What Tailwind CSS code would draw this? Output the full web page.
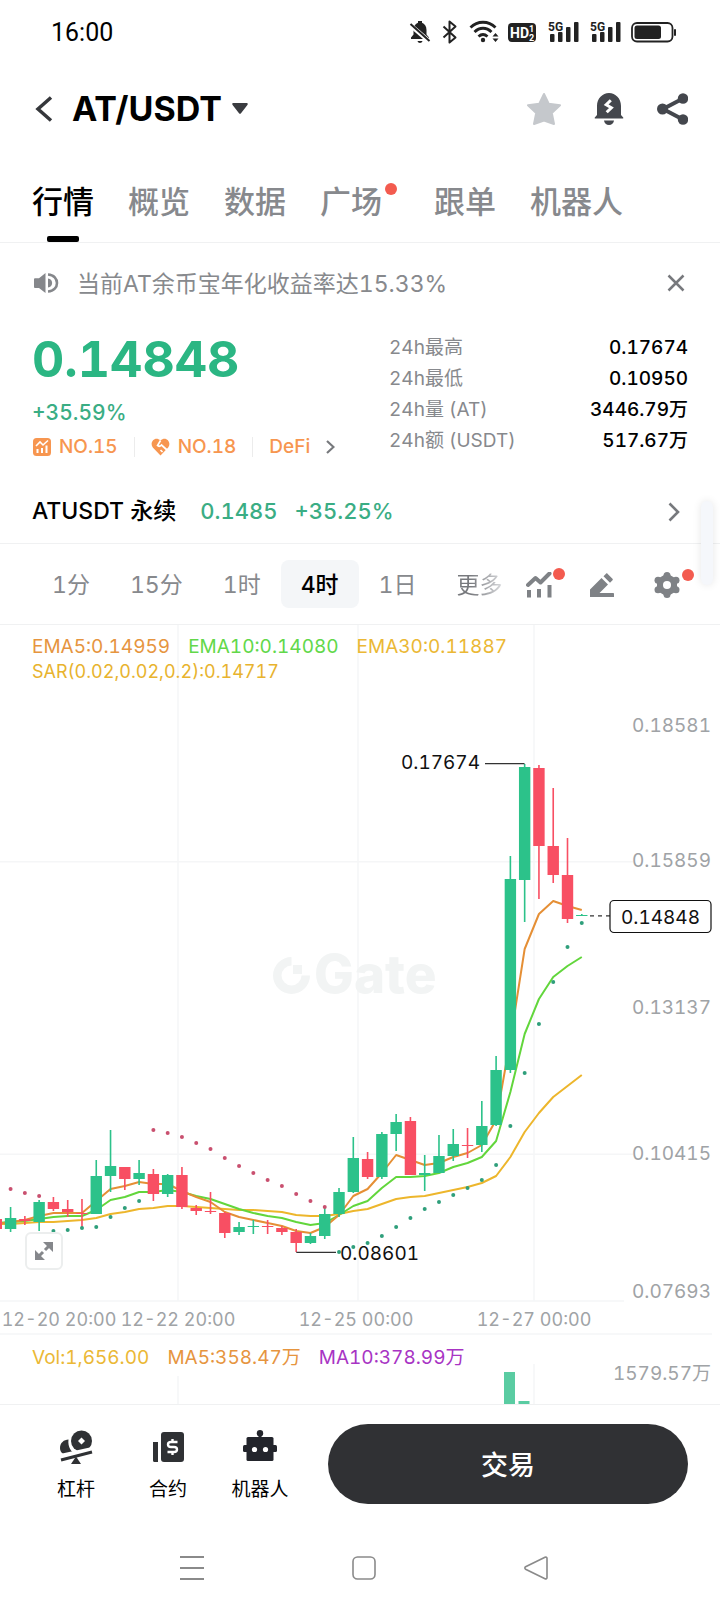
<!DOCTYPE html>
<html lang="zh-CN">
<head>
  <meta charset="UTF-8" />
  <meta name="viewport" content="width=device-width, initial-scale=1.0"/>
  <title>AT/USDT</title>
  <script src="https://cdn.jsdelivr.net/npm/@tailwindcss/browser@4"></script>
</head>
<body class="bg-white text-black font-['Inter','Noto_Sans_CJK_SC',sans-serif] tabular-nums">
<div class="relative flex min-h-screen flex-col">

  <!-- Status bar -->
  <div class="flex h-16 items-center justify-between pl-[51px] pr-[43px]">
    <span class="pt-[2px] font-['Roboto',sans-serif] text-[25px]">16:00</span>
    <svg class="h-6 w-[268px]" viewBox="410 20 268 24" fill="#222" aria-hidden="true">
      <!-- muted bell -->
      <path d="M412 39v-1.500l2.500-3V30c0-4 2-6.500 4.500-7.300V21h4v1.700c2.500.8 4.500 3.300 4.500 7.300v4.500l2.500 3V39zM418.500 41h5c-.5 2.500-4.500 2.500-5 0z"/>
      <path d="M410 24l21 18" stroke="#fff" stroke-width="4.500"/>
      <path d="M411.500 24l19 17" stroke="#222" stroke-width="2"/>
      <!-- bluetooth -->
      <path d="M444.500 26.500l12 11-6 5v-21l6 5-12 11" fill="none" stroke="#222" stroke-width="2" stroke-linejoin="round"/>
      <!-- wifi -->
      <g fill="none" stroke="#222" stroke-width="2.800">
        <path d="M471.500 27.500c7-7 18-7 25 0"/><path d="M475.500 32c5-5 12-5 17 0"/><path d="M479.500 36.500c3-2.700 6-2.700 9 0"/>
      </g>
      <circle cx="484" cy="40" r="2.200"/>
      <path d="M493.500 36.500l3-3.500 3 3.500zM493.500 38.500l3 3.500 3-3.500z"/>
      <!-- hd -->
      <rect x="509" y="23" width="28" height="19" rx="4"/>
      <g fill="#fff" font-family="Roboto" font-weight="700">
        <text x="511" y="38" font-size="14">HD</text>
        <text x="530" y="32" font-size="9">1</text>
        <text x="530" y="41" font-size="9">2</text>
      </g>
      <!-- signals -->
      <g id="signal">
        <text x="549" y="31" font-size="12" font-family="Roboto" font-weight="700">5G</text>
        <rect x="551" y="34" width="4.500" height="8" rx="1"/><rect x="559" y="32" width="4.500" height="10" rx="1"/><rect x="567" y="27" width="4.500" height="15" rx="1"/><rect x="575" y="22" width="4.500" height="20" rx="1"/>
      </g>
      <use href="#signal" x="42"/>
      <!-- battery -->
      <rect x="633" y="23" width="40.500" height="18.500" rx="5" fill="none" stroke="#222" stroke-width="1.800"/>
      <rect x="635.500" y="25.500" width="26.500" height="13.500" rx="2.500"/>
      <rect x="675" y="29" width="2" height="7" rx="1"/>
    </svg>
  </div>

  <!-- Header -->
  <header class="flex h-[89px] items-center pl-8 pr-8">
    <button type="button" aria-label="返回" class="flex h-10 w-10 items-center">
      <svg class="h-7 w-6" viewBox="0 0 24 28" fill="none" stroke="#35373b" stroke-width="3.500"><path d="M19 2.500L6 14l13 11.500"/></svg>
    </button>
    <button type="button" class="flex items-center gap-[10px]">
      <span class="text-[34px] leading-10 font-bold">AT/USDT</span>
      <svg class="h-[11px] w-4" viewBox="0 0 16 11" fill="#3a3c40"><path d="M1.500 0h13c1.200 0 1.600 1 .9 1.900L9 10.200c-.6.800-1.400.8-2 0L.6 1.900C-.1 1 .3 0 1.500 0z"/></svg>
    </button>
    <div class="ml-auto flex items-center gap-[33px]">
      <button type="button" aria-label="收藏">
        <svg class="size-[34px]" viewBox="0 0 34 34" fill="#c5c8cc" stroke="#c5c8cc" stroke-width="2" stroke-linejoin="round"><path d="M17 2l4.700 9.800L33 13.300l-8.200 7.700 2.200 11L17 28.500 7 32l2.200-11L1 13.300l11.300-1.500z"/></svg>
      </button>
      <button type="button" aria-label="提醒">
        <svg class="h-8 w-[30px]" viewBox="0 0 30 32" fill="#44474d">
          <path d="M3 22V13C3 5.500 8.500 0 15 0s12 5.500 12 13v9l2 2.200c.7.800.3 1.400-.6 1.400H1.600c-.9 0-1.300-.6-.6-1.400z"/>
          <path d="M10 27.500h10c-.3 2.700-2.300 4.500-5 4.500s-4.700-1.800-5-4.500z"/>
          <path d="M16.800 7.200l-4.600 4.500 5.200 3-4.700 4.600" fill="none" stroke="#fff" stroke-width="3"/>
        </svg>
      </button>
      <button type="button" aria-label="分享">
        <svg class="h-8 w-[31px]" viewBox="0 0 31 32" fill="#44474d"><path d="M26 5.500L6 16l20 10.500" fill="none" stroke="#44474d" stroke-width="4"/><circle cx="26" cy="5.500" r="5.200"/><circle cx="26" cy="26.500" r="5.200"/><circle cx="5.500" cy="16" r="5.500"/></svg>
      </button>
    </div>
  </header>

  <!-- Tabs -->
  <nav class="flex h-[90px] gap-[34px] border-b border-[#f0f1f2] pl-8 text-[31px] font-medium text-[#87898d]">
    <a href="#" class="relative flex h-full items-center pt-[10px] text-black">行情<span class="absolute bottom-0 left-[15px] h-[6px] w-8 rounded-[2px] bg-black"></span></a>
    <a href="#" class="flex items-center pt-[10px]">概览</a>
    <a href="#" class="flex items-center pt-[10px]">数据</a>
    <a href="#" class="relative mr-[18px] flex items-center pt-[10px]">广场<span class="absolute -right-[15px] top-[30px] size-3 rounded-full bg-[#f35b4f]"></span></a>
    <a href="#" class="flex items-center pt-[10px]">跟单</a>
    <a href="#" class="flex items-center pt-[10px]">机器人</a>
  </nav>

  <!-- Notice -->
  <div class="flex h-[79px] items-center pl-[33px] pr-[35px] text-[#87898d]">
    <svg class="h-6 w-7" viewBox="0 0 28 24" fill="#85878b"><path d="M1 8.500c0-.8.500-1.200 1.200-1.200H6L12.500 2v20L6 17H2.200C1.500 17 1 16.500 1 15.700z"/><path d="M15 7.500c5.500.3 5.500 8.700 0 9z"/><path d="M15 3.500c12 .5 12 16.500 0 17" fill="none" stroke="#85878b" stroke-width="2.600"/></svg>
    <a href="#" class="ml-4 pt-[2px] text-[23px] leading-8">当前AT余币宝年化收益率达15.33%</a>
    <button type="button" aria-label="关闭" class="ml-auto">
      <svg class="size-[18px]" viewBox="0 0 18 18" stroke="#77797d" stroke-width="2.500"><path d="M1.500 1.500l15 15M16.500 1.500l-15 15"/></svg>
    </button>
  </div>

  <!-- Price summary -->
  <section class="flex h-[152px] justify-between pl-8 pr-8 pt-[10px]">
    <div>
      <div class="text-[50px] leading-[54px] font-bold text-[#2bb683]">0.14848</div>
      <div class="mt-[14px] text-[21px] leading-[26px] font-medium text-[#3aad84]">+35.59%</div>
      <div class="mt-[9px] flex h-6 items-center text-[19px] font-medium text-[#f79650]">
        <svg class="mr-2 size-[19px]" viewBox="0 0 19 19"><rect x="1" y="0" width="18" height="18" rx="3.500" fill="#f79650"/><path d="M4 8l4-4 3 3 5-4.500" fill="none" stroke="#fff" stroke-width="1.600"/><path d="M5.500 15v-4M10 15v-5M14.500 15V7.500" stroke="#fff" stroke-width="2"/></svg>
        <a href="#">NO.15</a>
        <span class="mx-4 h-5 w-px bg-[#ececec]"></span>
        <svg class="mr-2 h-[18px] w-[19px]" viewBox="0 0 19 18"><path d="M9.500 17.500L1.800 9.500C-2 4.500 4-2.500 9.500 2.500 15-2.500 21 4.500 17.200 9.500z" fill="#f79650"/><path d="M9.500 2.500L6.500 7.500c1.500 1.500 3 .5 4-.5l5.500 5M9.500 12l2 2" fill="none" stroke="#fff" stroke-width="1.700"/></svg>
        <a href="#">NO.18</a>
        <span class="mx-4 h-5 w-px bg-[#ececec]"></span>
        <a href="#">DeFi</a>
        <svg class="ml-4 h-[14px] w-[9px]" viewBox="0 0 9 14" fill="none" stroke="#77797d" stroke-width="2.200"><path d="M1 1l6.500 6L1 13"/></svg>
      </div>
    </div>
    <dl class="grid w-[299px] grid-cols-[auto_auto] content-start justify-between text-[19px] leading-[31px]">
      <dt class="text-[#87898d]">24h最高</dt><dd class="text-right font-medium">0.17674</dd>
      <dt class="text-[#87898d]">24h最低</dt><dd class="text-right font-medium">0.10950</dd>
      <dt class="text-[#87898d]">24h量 (AT)</dt><dd class="text-right font-medium">3446.79万</dd>
      <dt class="text-[#87898d]">24h额 (USDT)</dt><dd class="text-right font-medium">517.67万</dd>
    </dl>
  </section>

  <!-- Perpetual contract -->
  <a href="#" class="flex h-[70px] items-center border-b border-[#f0f1f2] pl-8 pr-10 pt-[6px] text-[22px] font-medium">
    <span class="text-[23px]">ATUSDT 永续</span>
    <span class="ml-6 text-[#3aad84]">0.1485</span>
    <span class="ml-[17px] text-[#3aad84]">+35.25%</span>
    <svg class="ml-auto h-5 w-3" viewBox="0 0 12 20" fill="none" stroke="#77797d" stroke-width="2.600"><path d="M1.500 1.500l8.500 8.500-8.500 8.500"/></svg>
  </a>

  <!-- Intervals -->
  <div class="flex h-[81px] items-center border-b border-[#f0f1f2] pl-8 pr-[26px] text-[23px] text-[#87898d]">
    <button type="button" class="h-12 px-5 pt-[3px]">1分</button>
    <button type="button" class="h-12 px-5 pt-[3px]">15分</button>
    <button type="button" class="h-12 px-5 pt-[3px]">1时</button>
    <button type="button" class="h-12 rounded-lg bg-[#f4f6f8] px-5 pt-[3px] font-medium text-black">4时</button>
    <button type="button" class="h-12 px-5 pt-[3px]">1日</button>
    <button type="button" class="h-12 bg-linear-to-r from-[#77797d] from-50% to-[#dcdde0] bg-clip-text pl-5 pt-[3px] text-transparent">更多</button>
    <div class="ml-auto flex items-center pt-[2px]">
      <button type="button" aria-label="指标" class="relative mr-[38px]">
        <svg class="size-[26px]" viewBox="0 0 26 26" fill="none" stroke="#7f8286"><path d="M2 13l7.500-7 5 4.500 9-9" stroke-width="4" stroke-linecap="round" stroke-linejoin="round"/><path d="M3 25.500V18M13 25.500V17M23.500 25.500V13" stroke-width="4"/></svg>
        <span class="absolute -right-[13px] -top-[4px] size-3 rounded-full bg-[#f35b4f]"></span>
      </button>
      <button type="button" aria-label="画线" class="mr-10">
        <svg class="size-6" viewBox="0 0 24 24" fill="#7f8286"><path d="M0 16.500L11.500 5l6.500 6.500-8.500 8.500H23c.6 0 1 .4 1 1v3H0zM13.500 3.200L16 .7c.5-.5 1-.5 1.500 0l5 5c.5.5.5 1 0 1.500L20 9.700z"/></svg>
      </button>
      <button type="button" aria-label="设置" class="relative mr-[14px]">
        <svg class="size-[26px]" viewBox="0 0 26 26"><path d="M13 3l8.500 5v10L13 23l-8.500-5V8z" fill="#7f8286" stroke="#7f8286" stroke-width="3" stroke-linejoin="round"/><g fill="#7f8286"><circle cx="13" cy="3.500" r="3.500"/><circle cx="22" cy="8.200" r="3.500"/><circle cx="22" cy="17.800" r="3.500"/><circle cx="13" cy="22.500" r="3.500"/><circle cx="4" cy="17.800" r="3.500"/><circle cx="4" cy="8.200" r="3.500"/></g><circle cx="13" cy="13" r="4" fill="#fff"/></svg>
        <span class="absolute -right-[14px] -top-[3px] size-3 rounded-full bg-[#f35b4f]"></span>
      </button>
    </div>
  </div>

  <!-- Chart -->
  <section class="relative border-b border-[#f0f1f2]">
    <svg class="block w-full" viewBox="0 625 720 779" font-size="19">
      <g stroke="#f5f6f7" stroke-width="1.500">
        <path d="M178 625V1301M358 625V1301M534 625V1301M178 1376V1404M534 1364V1404"/>
        <path d="M0 861.700H633M0 1154.300H633M0 1301H624M0 1334H712"/>
      </g>
      <g fill="#f2f4f4">
        <path d="M291.500 957a18.500 18.500 0 1 0 18.500 18.500h-8.500a10 10 0 1 1-10-10z"/>
        <path d="M293 965h9v9h-9z"/>
        <text x="314" y="993" font-size="53" font-weight="800">Gate</text>
      </g>
      <g id="lines" fill="none" stroke-width="2" stroke-linejoin="round"></g>
      <g id="candles"></g>
      <g id="sar"></g>
      <g fill="#5acca2">
        <rect x="504" y="1372" width="11" height="32"/>
        <rect x="518.500" y="1401" width="11" height="3"/>
      </g>
      <g stroke="#333" stroke-width="1.200" fill="none">
        <path d="M485 763.700H524.500M296.300 1252.300H336"/>
        <path d="M590 915.800H610" stroke-dasharray="4 4"/>
        <rect x="610" y="900.500" width="101" height="32" rx="4" fill="#fff" stroke="#111"/>
      </g>
      <g fill="#111">
        <text x="480" y="769" text-anchor="end">0.17674</text>
        <text x="340" y="1260">0.08601</text>
        <text x="700" y="924" text-anchor="end">0.14848</text>
      </g>
      <g fill="#a0a3a6" text-anchor="end">
        <text x="711" y="732">0.18581</text>
        <text x="711" y="867">0.15859</text>
        <text x="711" y="1014">0.13137</text>
        <text x="711" y="1160">0.10415</text>
        <text x="711" y="1298">0.07693</text>
        <text x="711" y="1380">1579.57万</text>
      </g>
      <g fill="#a0a3a6" text-anchor="middle" font-size="18">
        <text x="59" y="1326">12-20 20:00</text>
        <text x="178" y="1326">12-22 20:00</text>
        <text x="356" y="1326">12-25 00:00</text>
        <text x="534" y="1326">12-27 00:00</text>
      </g>
    </svg>
    <div class="absolute left-8 top-[9px] text-[19px] leading-[25px]">
      <div class="flex gap-[18px]">
        <span class="text-[#e6953f]">EMA5:0.14959</span>
        <span class="text-[#62d84a]">EMA10:0.14080</span>
        <span class="text-[#ebb835]">EMA30:0.11887</span>
      </div>
      <div class="text-[18px] text-[#e8b32e]">SAR(0.02,0.02,0.2):0.14717</div>
    </div>
    <div class="absolute bottom-[34px] left-8 flex gap-[18px] text-[19px] leading-6">
      <span class="text-[#ebb835]">Vol:1,656.00</span>
      <span class="text-[#e6953f]">MA5:358.47万</span>
      <span class="text-[#a834c4]">MA10:378.99万</span>
    </div>
    <button type="button" aria-label="全屏" class="absolute bottom-[134px] left-[25px] flex size-[38px] items-center justify-center rounded-md border-2 border-[#eceeee] bg-white">
      <svg class="size-[18px]" viewBox="0 0 18 18" fill="#85878b"><path d="M8 0h10v10zM0 8v10h10z"/><path d="M15 3l-5 5M8 10l-5 5" stroke="#85878b" stroke-width="3"/></svg>
    </button>
  </section>

  <!-- Bottom bar -->
  <footer class="flex h-[118px] items-center gap-[22px] pl-[30px] pr-8">
    <div class="grid grid-cols-[92px_92px_92px] pt-1 text-[19px] leading-6">
      <button type="button" class="flex flex-col items-center gap-[14px]">
        <svg class="size-[34px]" viewBox="0 0 34 34" fill="#2f3134"><circle cx="22.500" cy="11" r="10.500"/><path d="M22.500 7.500L26 11l-3.500 3.500L19 11z" fill="#fff"/><path d="M9.500 9.500c-1 8 3 12.500 7 14.500-7 3.500-15.500 1-15.500-6 0-5 4-8.500 8.500-8.500z"/><path d="M1 24l32-7v5L2 30z" fill="#fff"/><path d="M2 30l31-8" stroke="#2f3134" stroke-width="3.200"/><path d="M17 26.500l5 7.500H12z"/></svg>
        杠杆
      </button>
      <button type="button" class="flex flex-col items-center gap-[14px]">
        <svg class="size-[34px]" viewBox="0 0 34 34"><path d="M2 12h5v20H3.500c-1 0-1.500-.6-1.500-1.500z" fill="#2f3134"/><rect x="10" y="2" width="23" height="30" rx="3" fill="#2f3134"/><path d="M26.500 12h-6.500c-4 0-4 5 0 5h3c4 0 4 5 0 5h-6.500M21.500 9v3M21.500 22v3" fill="none" stroke="#fff" stroke-width="2.400"/></svg>
        合约
      </button>
      <button type="button" class="flex flex-col items-center gap-[14px]">
        <svg class="size-[34px]" viewBox="0 0 34 34" fill="#23252c"><circle cx="17" cy="3.200" r="3.200"/><path d="M15.500 5h3v4h-3z"/><rect x="3.500" y="7" width="27" height="24" rx="1.500"/><rect x="0" y="15" width="34" height="7" rx="1.500"/><circle cx="11.500" cy="19.500" r="2.600" fill="#fff"/><circle cx="22.500" cy="19.500" r="2.600" fill="#fff"/></svg>
        机器人
      </button>
    </div>
    <button type="button" class="h-20 flex-1 rounded-full bg-[#303134] pt-1 text-[27px] font-medium text-white">交易</button>
  </footer>

  <!-- System navigation -->
  <div class="grid flex-1 grid-cols-3 place-items-center pl-[106px] pr-[98px]">
    <button type="button" aria-label="菜单"><svg class="size-6" viewBox="0 0 24 24" stroke="#8a8a8a" stroke-width="1.800"><path d="M0 1h24M0 12h24M0 23h24"/></svg></button>
    <button type="button" aria-label="主页"><svg class="size-6" viewBox="0 0 24 24" fill="none" stroke="#8a8a8a" stroke-width="1.600"><rect x="1" y="1" width="22" height="22" rx="4.500"/></svg></button>
    <button type="button" aria-label="后退"><svg class="size-6" viewBox="0 0 24 24" fill="none" stroke="#8a8a8a" stroke-width="1.600"><path d="M21 1.300L1.600 10.800c-1 .6-1 1.800 0 2.400L21 22.700c1 .5 2 0 2-1V2.300c0-1-1-1.500-2-1z"/></svg></button>
  </div>

  <!-- Side handle -->
  <div class="absolute right-[7px] top-[501px] h-[84px] w-3 rounded-md bg-[#f5f7fb] shadow-[0_0_8px_rgb(0,0,0,0.1)]"></div>
</div>

<script>
  // up, high, top, bottom, low, ema5, ema10, ema30, sar
  const rows = [
    [0, 1219, 1219, 1229, 1229, 1224, 1223, 1224, null],
    [1, 1207, 1218, 1229, 1232, 1222, 1222, 1224, 1189],
    [0, 1216, 1219, 1221, 1225, 1220, 1221, 1223, 1193],
    [1, 1200, 1202, 1222, 1231, 1216, 1219, 1222, 1196],
    [0, 1197, 1202, 1209, 1211, 1213, 1217, 1222, 1231],
    [0, 1200, 1209, 1212, 1217, 1213, 1216, 1221, 1230],
    [0, 1199, 1213, 1214, 1229, 1213, 1216, 1220, 1228],
    [1, 1160, 1176, 1214, 1214, 1201, 1210, 1218, 1227],
    [1, 1130, 1166, 1176, 1192, 1189, 1200, 1214, 1217],
    [0, 1167, 1167, 1179, 1190, 1186, 1197, 1212, 1208],
    [1, 1160, 1173, 1179, 1185, 1182, 1192, 1209, 1201],
    [0, 1169, 1174, 1194, 1201, 1184, 1192, 1208, 1130],
    [1, 1174, 1175, 1194, 1197, 1184, 1190, 1206, 1133],
    [0, 1167, 1175, 1207, 1209, 1191, 1192, 1206, 1137],
    [0, 1205, 1208, 1211, 1215, 1197, 1196, 1207, 1143],
    [0, 1192, 1211, 1212, 1214, 1202, 1199, 1208, 1149],
    [0, 1212, 1213, 1233, 1238, 1212, 1204, 1209, 1158],
    [1, 1222, 1227, 1232, 1235, 1217, 1209, 1210, 1166],
    [1, 1220, 1226, 1227, 1234, 1220, 1213, 1210, 1173],
    [0, 1220, 1226, 1227, 1234, 1223, 1216, 1211, 1180],
    [0, 1226, 1228, 1232, 1235, 1226, 1218, 1212, 1186],
    [0, 1229, 1232, 1243, 1252, 1231, 1222, 1215, 1194],
    [1, 1233, 1236, 1243, 1244, 1233, 1225, 1216, 1201],
    [1, 1208, 1214, 1236, 1239, 1227, 1223, 1216, 1207],
    [1, 1188, 1192, 1214, 1217, 1215, 1215, 1214, 1252],
    [1, 1137, 1158, 1192, 1193, 1196, 1206, 1211, 1247],
    [0, 1152, 1159, 1177, 1179, 1189, 1201, 1209, 1243],
    [1, 1132, 1134, 1177, 1179, 1173, 1188, 1204, 1236],
    [1, 1114, 1122, 1134, 1151, 1155, 1177, 1199, 1227],
    [0, 1117, 1121, 1175, 1175, 1160, 1177, 1197, 1218],
    [1, 1155, 1173, 1175, 1191, 1165, 1176, 1196, 1209],
    [1, 1135, 1156, 1173, 1173, 1163, 1173, 1193, 1202],
    [1, 1129, 1144, 1156, 1161, 1157, 1167, 1190, 1195],
    [0, 1128, 1145, 1146, 1158, 1153, 1163, 1187, 1188],
    [1, 1101, 1126, 1145, 1152, 1145, 1157, 1183, 1180],
    [1, 1056, 1070, 1125, 1126, 1120, 1141, 1176, 1165],
    [1, 856, 879, 1070, 1073, 1040, 1092, 1157, 1126],
    [1, 764, 767, 880, 922, 949, 1034, 1132, 1073],
    [0, 765, 768, 846, 899, 914, 999, 1113, 1024],
    [0, 788, 846, 875, 883, 901, 977, 1097, 982],
    [0, 838, 875, 919, 923, 906, 966, 1086, 947],
    [1, 914, 915, 916, 916, 910, 957, 1075, 923],
  ];
  const step = 14.28;
  const x = i => -3.7 + i * step;

  let candles = "", sar = "";
  rows.forEach((r, i) => {
    const color = r[0] ? "#2cc28a" : "#f84f63";
    candles += `<rect x="${x(i) - 0.8}" y="${r[1]}" width="1.6" height="${r[4] - r[1]}" fill="${color}"/>
      <rect x="${x(i) - 5.7}" y="${r[2]}" width="11.4" height="${r[3] - r[2]}" fill="${color}"/>`;
    if (r[8]) {
      sar += `<circle cx="${x(i)}" cy="${r[8]}" r="2" fill="${r[8] < r[2] ? "#c9506f" : "#2f9f7b"}"/>`;
    }
  });
  document.getElementById("candles").innerHTML = candles;
  document.getElementById("sar").innerHTML = sar;

  const line = (col, color) =>
    `<polyline stroke="${color}" points="${rows.map((r, i) => x(i) + "," + r[col]).join(" ")}"/>`;
  document.getElementById("lines").innerHTML = line(7, "#edb62c") + line(6, "#62d63c") + line(5, "#e58f35");
</script>
</body>
</html>
